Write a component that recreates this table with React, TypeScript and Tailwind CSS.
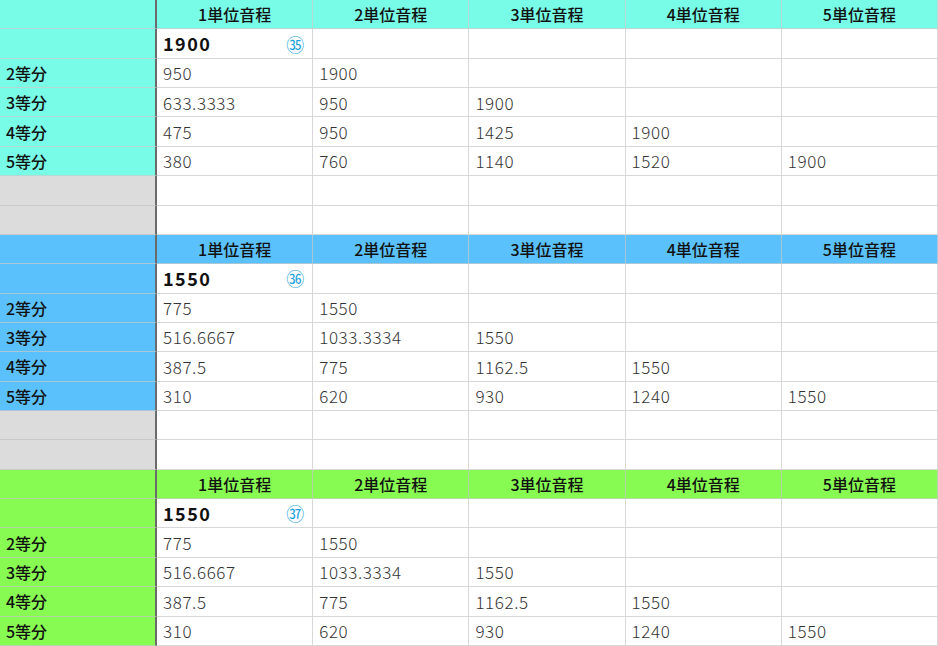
import React from "react";

type Section = {
  base: string;
  mark: string;
  rows: string[][];
  bg: string;
  line: string;
};

const sections: Section[] = [
  {
    base: "1900",
    mark: "㉟",
    bg: "bg-[#78fce7]",
    line: "border-[#b6d9d3]",
    rows: [
      ["950", "1900"],
      ["633.3333", "950", "1900"],
      ["475", "950", "1425", "1900"],
      ["380", "760", "1140", "1520", "1900"],
    ],
  },
  {
    base: "1550",
    mark: "㊱",
    bg: "bg-[#5bc1fc]",
    line: "border-[#a9c6d8]",
    rows: [
      ["775", "1550"],
      ["516.6667", "1033.3334", "1550"],
      ["387.5", "775", "1162.5", "1550"],
      ["310", "620", "930", "1240", "1550"],
    ],
  },
  {
    base: "1550",
    mark: "㊲",
    bg: "bg-[#87fb51]",
    line: "border-[#b4d5a4]",
    rows: [
      ["775", "1550"],
      ["516.6667", "1033.3334", "1550"],
      ["387.5", "775", "1162.5", "1550"],
      ["310", "620", "930", "1240", "1550"],
    ],
  },
];

const headers = ["1単位音程", "2単位音程", "3単位音程", "4単位音程", "5単位音程"];
const labels = ["2等分", "3等分", "4等分", "5等分"];

const Row: React.FC<{ first: React.ReactNode; firstCls: string; children: React.ReactNode }> = ({
  first,
  firstCls,
  children,
}) => (
  <div className="flex h-[29.36px]">
    <div
      className={`w-[157px] shrink-0 flex items-center pl-[6px] border-b border-r-2 border-r-[#6b6b6b] text-[16px] font-medium text-[#111] ${firstCls}`}
    >
      {first}
    </div>
    <div className="flex-1 grid grid-cols-5">{children}</div>
  </div>
);

const Cell: React.FC<{ children?: React.ReactNode; className?: string }> = ({ children, className }) => (
  <div
    className={`flex items-center pl-[6px] border-b border-r border-[#d8d8d8] text-[17px] font-light tracking-[0.6px] text-[#333] ${className ?? ""}`}
  >
    {children}
  </div>
);

const App: React.FC = () => {
  return (
    <div
      className="w-[938px] h-[646px] overflow-hidden bg-white"
      style={{ fontFamily: '"Noto Sans CJK JP", "Noto Sans", sans-serif' }}
    >
      {sections.map((s, si) => (
        <div key={si}>
          <Row first="" firstCls={`${s.bg} ${s.line}`}>
            {headers.map((h) => (
              <div
                key={h}
                className={`flex items-center justify-center border-b border-r ${s.line} ${s.bg} text-[16px] font-medium text-[#111]`}
              >
                {h}
              </div>
            ))}
          </Row>
          <Row first="" firstCls={`${s.bg} ${s.line}`}>
            <Cell className="justify-between pr-[8px]">
              <span className="font-bold text-[18px] tracking-[1.5px] text-[#111]">{s.base}</span>
              <span className="text-[18px] tracking-normal font-normal text-[#1fa3dc] leading-none">{s.mark}</span>
            </Cell>
            <Cell />
            <Cell />
            <Cell />
            <Cell />
          </Row>
          {s.rows.map((r, ri) => (
            <Row key={ri} first={labels[ri]} firstCls={`${s.bg} ${s.line}`}>
              {[0, 1, 2, 3, 4].map((ci) => (
                <Cell key={ci}>{r[ci] ?? ""}</Cell>
              ))}
            </Row>
          ))}
          {si < 2 &&
            [0, 1].map((g) => (
              <Row key={`g${g}`} first="" firstCls="bg-[#dcdcdc] border-[#c9c9c9]">
                {[0, 1, 2, 3, 4].map((ci) => (
                  <Cell key={ci} />
                ))}
              </Row>
            ))}
        </div>
      ))}
    </div>
  );
};

export default App;
